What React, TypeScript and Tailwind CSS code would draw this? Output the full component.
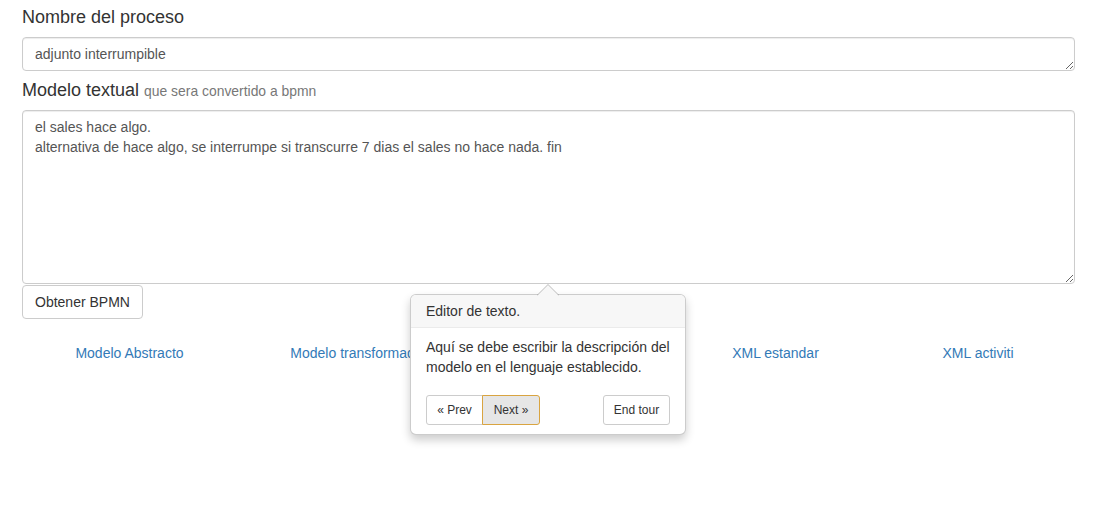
import React from 'react';

const links = ['Modelo Abstracto', 'Modelo transformado', 'Modelo BPMN', 'XML estandar', 'XML activiti'];

const App: React.FC = () => {
  return (
    <div
      className="relative min-h-[511px] bg-white px-[22px] pt-[7px] text-[14px] leading-[20px] text-[#333]"
      style={{ fontFamily: '"Liberation Sans", Arial, sans-serif' }}
    >
      {/* Nombre */}
      <h4 className="mb-[10px] text-[18px] leading-[20px] font-normal">Nombre del proceso</h4>
      <textarea
        readOnly
        rows={1}
        defaultValue="adjunto interrumpible"
        className="block h-[34px] w-full rounded-[4px] border border-[#ccc] px-[12px] py-[6px] text-[14px] leading-[20px] text-[#555] shadow-[inset_0_1px_1px_rgba(0,0,0,0.075)] outline-none"
      />

      {/* Modelo textual */}
      <h4 className="mt-[9px] mb-[10px] h-[20px] text-[18px] leading-[20px] font-normal">
        Modelo textual <small className="text-[13.9px] leading-none text-[#777]">que sera convertido a bpmn</small>
      </h4>
      <textarea
        readOnly
        defaultValue={'el sales hace algo.\nalternativa de hace algo, se interrumpe si transcurre 7 dias el sales no hace nada. fin'}
        className="block h-[174px] w-full rounded-[4px] border border-[#ccc] px-[12px] py-[6px] text-[14px] leading-[20px] text-[#555] shadow-[inset_0_1px_1px_rgba(0,0,0,0.075)] outline-none"
      />
      <button className="mt-px h-[34px] rounded-[4px] border border-[#ccc] bg-white px-[12px] text-[14px] text-[#333]">
        Obtener BPMN
      </button>

      {/* Links */}
      <div className="mt-[14px] grid grid-cols-[215px_239px_194px_211px_194px]">
        {links.map((l) => (
          <a key={l} className="py-[10px] text-center text-[#337ab7]">
            {l}
          </a>
        ))}
      </div>

      {/* Tour popover */}
      <div className="absolute top-[294px] left-[410px] w-[276px] rounded-[6px] border border-[rgba(0,0,0,0.2)] bg-white shadow-[0_5px_10px_rgba(0,0,0,0.2)]">
        <svg className="absolute top-[-11px] left-[126px]" width="22" height="12" viewBox="0 0 22 12">
          <path d="M0 11.5 L11 0.5 L22 11.5 Z" fill="#f7f7f7" />
          <path d="M0 11.5 L11 0.5 L22 11.5" fill="none" stroke="rgba(0,0,0,0.25)" strokeWidth="1" />
        </svg>
        <h3 className="rounded-t-[5px] border-b border-[#ebebeb] bg-[#f7f7f7] px-[15px] py-[6px] text-[14px] leading-[20px] font-normal">
          Editor de texto.
        </h3>
        <div className="px-[15px] py-[9px]">
          Aquí se debe escribir la descripción del modelo en el lenguaje establecido.
        </div>
        <div className="flex items-center justify-between px-[15px] py-[9px] text-[12px] leading-[18px]">
          <div className="flex">
            <button className="h-[30px] w-[57px] rounded-l-[3px] border border-[#ccc] bg-white text-[#333]">
              « Prev
            </button>
            <button className="-ml-px h-[30px] w-[58px] rounded-r-[3px] border border-[#d9a441] bg-[#e6e6e6] text-[#333]">
              Next »
            </button>
          </div>
          <button className="h-[30px] w-[67px] rounded-[3px] border border-[#ccc] bg-white text-[#333]">
            End tour
          </button>
        </div>
      </div>
    </div>
  );
};

export default App;
